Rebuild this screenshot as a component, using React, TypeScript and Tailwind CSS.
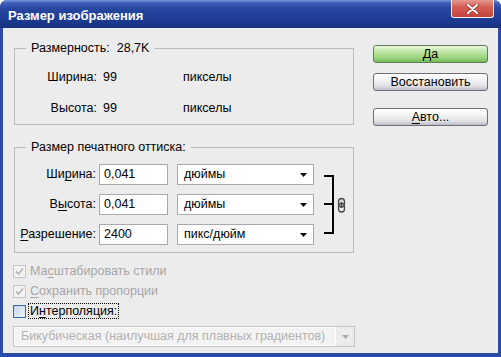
import React from "react";

const font = "font-['Liberation_Sans',Arial,sans-serif]";

function XPButton({ children, primary }: { children: React.ReactNode; primary?: boolean }) {
  const bg = primary
    ? "border-[#5f7f52] bg-[linear-gradient(#eaf8df,#bfe6a6_35%,#9ad47c_75%,#76b859)]"
    : "border-[#6f6f74] bg-[linear-gradient(#ffffff,#f4f4f4_35%,#e2e2e6_75%,#bcbcc8)]";
  return (
    <div className={`h-[18px] w-[115px] rounded-[3px] border flex items-center justify-center text-[12.5px] leading-none text-black ${bg}`}>
      {children}
    </div>
  );
}

function Select({ text }: { text: string }) {
  return (
    <div className="h-[21px] w-[137px] border border-[#a9a9ad] bg-white flex items-center pl-[6px] pr-[6px]">
      <span className="flex-1">{text}</span>
      <svg width="7" height="4" viewBox="0 0 7 4">
        <path d="M0 0h7L3.5 4z" fill="#000" />
      </svg>
    </div>
  );
}

function Field({ value }: { value: string }) {
  return (
    <div className="h-[21px] w-[69px] border border-[#a9a9ad] bg-white flex items-center pl-[4px]">{value}</div>
  );
}

function Check({ checked, disabled, focus, children }: { checked?: boolean; disabled?: boolean; focus?: boolean; children: React.ReactNode }) {
  return (
    <div className="h-[20px] flex items-center gap-[2px]">
      <div
        className={`w-[13px] h-[13px] border flex items-center justify-center ${
          disabled
            ? "border-[#c6c6c6] bg-[#f3f3f3]"
            : "border-[#3d6aa6] bg-[linear-gradient(135deg,#c3d5ee,#eef3fa)]"
        }`}
      >
        {checked && (
          <svg width="9" height="9" viewBox="0 0 9 9">
            <path d="M1 4.5l2.5 2.5L8 1.5" stroke={disabled ? "#b9b9b9" : "#21a121"} strokeWidth="1.8" fill="none" />
          </svg>
        )}
      </div>
      <span
        className={`leading-[14px] px-[1px] border ${focus ? "border-dotted border-black" : "border-transparent"} ${
          disabled ? "text-[#a6a6a6]" : "text-black"
        }`}
      >
        {children}
      </span>
    </div>
  );
}

function U({ children }: { children: React.ReactNode }) {
  return <span className="underline decoration-1 underline-offset-[2px]">{children}</span>;
}

export default function App() {
  return (
    <div className={`${font} w-[501px] h-[357px] rounded-t-[7px] overflow-hidden bg-[#2a4ca6] flex flex-col text-[12.5px] text-black`}>
      {/* title bar */}
      <div className="h-[28px] flex items-start justify-between bg-[linear-gradient(#7896de_0px,#3d5fba_3px,#26469f_9px,#1d3b93_20px,#17317f_28px)]">
        <span className="mt-[7px] ml-[8px] text-white font-bold text-[13px] leading-[18px]">Размер изображения</span>
        <div className="mr-[7px] w-[43px] h-[18px] rounded-b-[3px] border border-t-0 border-[#f2f2f2] bg-[linear-gradient(#e69a92,#d65e55_40%,#c2443d)] flex items-center justify-center">
          <svg width="13" height="10" viewBox="0 0 13 10">
            <path d="M2 1l9 8M11 1L2 9" stroke="#8a2a25" strokeWidth="3.4" strokeLinecap="round" />
            <path d="M2 1l9 8M11 1L2 9" stroke="#ffffff" strokeWidth="2.2" strokeLinecap="round" />
          </svg>
        </div>
      </div>

      {/* body */}
      <div className="flex-1 mx-[3px] mb-[4px] bg-[#ececec] flex">
        <div className="w-[352px] pl-[10px] pt-[11px] flex flex-col">
          <fieldset className="ml-[1px] w-[340px] border border-[#bcbcbc] pb-[8px]">
            <legend className="ml-[11px] px-[5px] leading-[18px]">
              Размерность:&nbsp;&nbsp;28,7K
            </legend>
            <div className="grid grid-cols-[82px_74px_auto] gap-x-[6px] gap-y-[15px] pt-[12px] leading-[16px]">
              <span className="text-right">Ширина:</span>
              <span>99</span>
              <span>пикселы</span>
              <span className="text-right">Высота:</span>
              <span>99</span>
              <span>пикселы</span>
            </div>
          </fieldset>

          <fieldset className="ml-[1px] mt-[13px] w-[340px] border border-[#bcbcbc] pb-[7px]">
            <legend className="ml-[11px] px-[5px] leading-[18px]">Размер печатного оттиска:</legend>
            <div className="flex pt-[8px]">
              <div className="grid grid-cols-[84px_78px_137px] grid-rows-[21px_21px_21px] gap-y-[9px] items-center">
                <span className="text-right pr-[3px]">
                  Ши<U>р</U>ина:
                </span>
                <Field value="0,041" />
                <Select text="дюймы" />
                <span className="text-right pr-[3px]">
                  В<U>ы</U>сота:
                </span>
                <Field value="0,041" />
                <Select text="дюймы" />
                <span className="text-right pr-[3px]">
                  <U>Р</U>азрешение:
                </span>
                <Field value="2400" />
                <Select text="пикс/дюйм" />
              </div>
              <svg width="24" height="81" viewBox="0 0 24 81" className="ml-[10px]">
                <rect x="0" y="11" width="10" height="2" fill="#000" />
                <rect x="0" y="39" width="10" height="2" fill="#000" />
                <rect x="0" y="68" width="10" height="2" fill="#000" />
                <rect x="8" y="11" width="2" height="59" fill="#000" />
                <rect x="14.5" y="34.5" width="6" height="8.5" rx="3" stroke="#4a4a4a" strokeWidth="1.3" fill="#d8d8d8" />
                <rect x="14.5" y="39.5" width="6" height="8.5" rx="3" stroke="#4a4a4a" strokeWidth="1.3" fill="none" />
                <rect x="16.8" y="38" width="1.4" height="6" fill="#4a4a4a" />
              </svg>
            </div>
          </fieldset>

          <div className="mt-[8px] flex flex-col">
            <Check checked disabled>
              Ма<U>с</U>штабировать стили
            </Check>
            <Check checked disabled>
              <U>С</U>охранить пропорции
            </Check>
            <Check focus>
              И<U>н</U>терполяция:
            </Check>
          </div>

          <div className="mt-[5px] w-[342px] h-[21px] border border-[#c4c4c4] flex">
            <div className="flex-1 border border-white bg-[#f3f3f3] flex items-center pl-[6px] text-[#b2b2b2]">
              Бикубическая (наилучшая для плавных градиентов)
            </div>
            <div className="w-[18px] flex items-center justify-center">
              <svg width="7" height="4" viewBox="0 0 7 4">
                <path d="M0 0h7L3.5 4z" fill="#a8a8a8" />
              </svg>
            </div>
          </div>
        </div>

        <div className="pl-[18px] pt-[17px] flex flex-col">
          <XPButton primary>Да</XPButton>
          <div className="mt-[10px]">
            <XPButton>Восстановить</XPButton>
          </div>
          <div className="mt-[17px]">
            <XPButton>
              <U>А</U>вто...
            </XPButton>
          </div>
        </div>
      </div>
    </div>
  );
}
